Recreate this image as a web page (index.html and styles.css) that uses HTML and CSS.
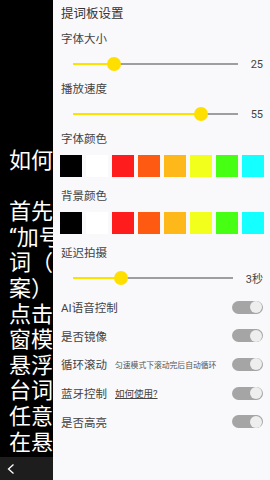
FILE: index.html
```html
<!DOCTYPE html>
<html lang="zh-CN">
<head>
    <meta charset="UTF-8">
    <meta name="viewport" content="width=device-width, initial-scale=1.0">
    <title>提词板设置</title>
    <link rel="stylesheet" href="styles.css">
</head>
<body>
    <div class="screen">
        <div class="reader">
            <div class="script-text">
                如何<br>
                <br>
                首先<br>
                “加号<br>
                词（<br>
                案）<br>
                点击<br>
                窗模<br>
                悬浮<br>
                台词<br>
                任意<br>
                在悬
            </div>
        </div>

        <div class="toolbar">
            <svg class="back" width="8" height="12" viewBox="0 0 8 12">
                <polyline points="6.5,1.5 1.5,6 6.5,10.5" fill="none" stroke="#fff" stroke-width="1.3"/>
            </svg>
        </div>

        <div class="panel">
            <div class="panel-title">提词板设置</div>

            <div class="label">字体大小</div>
            <div class="slider-row">
                <div class="slider">
                    <div class="fill" style="width: 25%"><span class="thumb"></span></div>
                </div>
                <span class="value">25</span>
            </div>

            <div class="label">播放速度</div>
            <div class="slider-row">
                <div class="slider">
                    <div class="fill" style="width: 78%"><span class="thumb"></span></div>
                </div>
                <span class="value">55</span>
            </div>

            <div class="label">字体颜色</div>
            <div class="swatches">
                <span class="swatch black"></span>
                <span class="swatch white"></span>
                <span class="swatch red"></span>
                <span class="swatch orange"></span>
                <span class="swatch amber"></span>
                <span class="swatch yellow"></span>
                <span class="swatch green"></span>
                <span class="swatch cyan"></span>
            </div>

            <div class="label">背景颜色</div>
            <div class="swatches">
                <span class="swatch black"></span>
                <span class="swatch white"></span>
                <span class="swatch red"></span>
                <span class="swatch orange"></span>
                <span class="swatch amber"></span>
                <span class="swatch yellow"></span>
                <span class="swatch green"></span>
                <span class="swatch cyan"></span>
            </div>

            <div class="label">延迟拍摄</div>
            <div class="slider-row">
                <div class="slider">
                    <div class="fill" style="width: 30%"><span class="thumb"></span></div>
                </div>
                <span class="value">3秒</span>
            </div>

            <div class="toggles">
                <div class="toggle-row">
                    <span class="toggle-label">AI语音控制</span>
                    <span class="switch"></span>
                </div>
                <div class="toggle-row">
                    <span class="toggle-label">是否镜像</span>
                    <span class="switch"></span>
                </div>
                <div class="toggle-row">
                    <span class="toggle-label">循环滚动</span>
                    <span class="hint">匀速模式下滚动完后自动循环</span>
                    <span class="switch"></span>
                </div>
                <div class="toggle-row">
                    <span class="toggle-label">蓝牙控制</span>
                    <span class="help">如何使用?</span>
                    <span class="switch"></span>
                </div>
                <div class="toggle-row">
                    <span class="toggle-label">是否高亮</span>
                    <span class="switch"></span>
                </div>
            </div>
        </div>
    </div>
</body>
</html>
```

FILE: styles.css
```css
body {
    margin: 0;
    background: #000;
    font-family: 'Roboto', 'Noto Sans CJK SC', sans-serif;
    overflow: hidden;
}

.screen {
    position: relative;
    width: 270px;
    height: 480px;
    display: flex;
    flex-direction: column;
    overflow: hidden;
}

.reader {
    flex: 1;
    width: 53px;
    overflow: hidden;
}

.script-text {
    padding: 148px 0 0 9px;
    color: #fff;
    font-size: 22px;
    line-height: 25.6px;
    white-space: nowrap;
}

.toolbar {
    height: 23px;
    background: #1d1d1d;
    display: flex;
    align-items: center;
    padding-left: 7px;
}

.back {
    display: block;
}

/* settings drawer over the reader */
.panel {
    position: absolute;
    top: 0;
    left: 53px;
    right: 0;
    bottom: 0;
    background: #f9f8fb;
    color: #444;
}

.panel-title {
    height: 27px;
    line-height: 28px;
    padding-left: 8px;
    font-size: 12.5px;
    color: #333;
}

.label {
    height: 24px;
    line-height: 24px;
    padding-left: 8px;
    font-size: 11.5px;
}

.slider-row {
    height: 26px;
    display: flex;
    align-items: center;
    gap: 13px;
    padding: 0 7px 0 20px;
}

.slider {
    flex: 1;
    height: 2px;
    background: #9e9e9e;
    position: relative;
}

.fill {
    height: 100%;
    background: #ffe100;
    position: relative;
}

.thumb {
    position: absolute;
    right: -7px;
    top: -6px;
    width: 14px;
    height: 14px;
    border-radius: 50%;
    background: #ffdf00;
}

.value {
    font-size: 11px;
    color: #444;
}

.swatches {
    display: flex;
    gap: 4px;
    padding-left: 7px;
    margin: 4px 0 7px;
}

.swatch {
    width: 22px;
    height: 22px;
}

.black { background: #000; }
.white { background: #fff; }
.red { background: #ff1c1c; }
.orange { background: #ff5a12; }
.amber { background: #ffb81a; }
.yellow { background: #f2ff1c; }
.green { background: #46ff12; }
.cyan { background: #14ffff; }

.toggles {
    padding-top: 2px;
}

.toggle-row {
    height: 28.6px;
    display: flex;
    align-items: center;
    padding: 0 7px 0 8px;
}

.toggle-label {
    font-size: 11.5px;
    margin-right: 8px;
}

.hint {
    font-size: 7.8px;
    color: #555;
}

.help {
    font-size: 9.5px;
    color: #444;
    text-decoration: underline;
}

.switch {
    margin-left: auto;
    width: 31px;
    height: 13px;
    border-radius: 7px;
    background: #a5a5a5;
    position: relative;
}

.switch:after {
    content: '';
    position: absolute;
    right: 1px;
    top: 0.5px;
    width: 12px;
    height: 12px;
    border-radius: 50%;
    background: #eeeeee;
}
```
